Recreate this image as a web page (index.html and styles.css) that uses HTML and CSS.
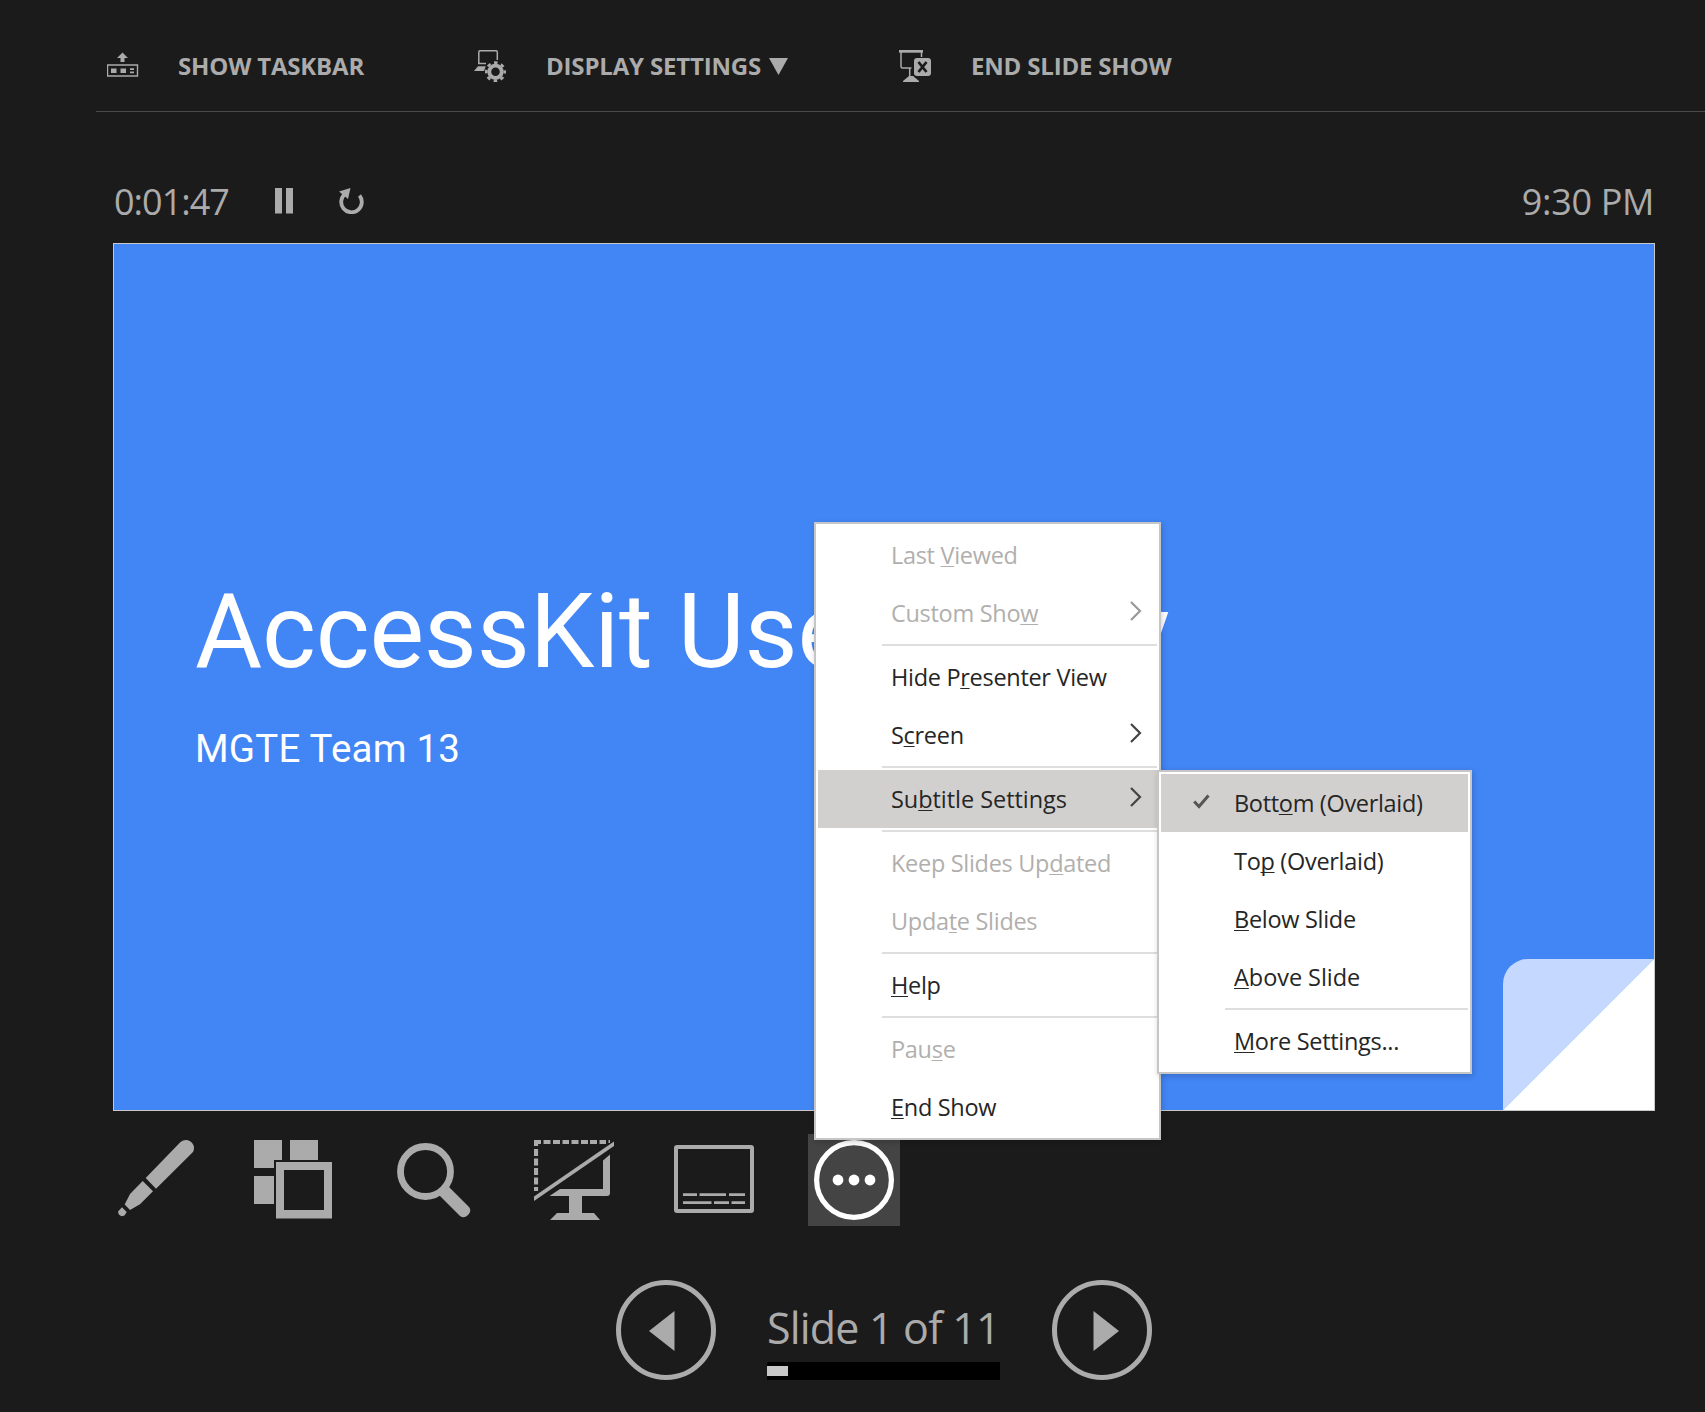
FILE: index.html
```html
<!DOCTYPE html>
<html lang="en">
<head>
<meta charset="utf-8">
<title>Presenter View</title>
<link rel="stylesheet" href="styles.css">
</head>
<body>
<div class="presenter">
  <header class="topbar">
    <button class="command command-taskbar">
      <svg width="32" height="32" viewBox="0 0 32 32" fill="#ababab">
        <path d="M15.500 2.500 21 8H17.500V12H13.500V8H10Z"/>
        <path d="M.5 15H30.500V26H.5Z" fill="none" stroke="#ababab" stroke-width="1.400"/>
        <path d="M4 18.500H9.500V23H4ZM13.500 18.500H19V23H13.500ZM23 18.300H27V20H23ZM23 21.500H27V23.200H23Z"/>
      </svg>
      <span>SHOW TASKBAR</span>
    </button>
    <button class="command command-display">
      <svg width="32" height="32" viewBox="0 0 32 32" fill="#ababab">
        <path d="M23.300 10V2Q23.300.8 22 .8H6Q4.800.8 4.800 2V13.400H12" fill="none" stroke="#ababab" stroke-width="1.500"/>
        <path d="M4 16.200H11.800L10 21H0Z"/>
        <circle cx="21.500" cy="21.800" r="6.200" fill="none" stroke="#ababab" stroke-width="3.800"/>
        <circle cx="21.500" cy="21.800" r="9.200" fill="none" stroke="#ababab" stroke-width="2.600" stroke-dasharray="3.610 3.615" stroke-dashoffset="1.800"/>
      </svg>
      <span>DISPLAY SETTINGS</span>
      <svg class="caret" width="20" height="18" viewBox="0 0 20 18"><path d="M0 0H19L9.500 17Z" fill="#ababab"/></svg>
    </button>
    <button class="command command-end">
      <svg width="32" height="32" viewBox="0 0 32 32" fill="#ababab">
        <path d="M0 0H24V2.700H0Z"/>
        <path d="M2 2V16.500Q2 18 3.500 18H12.500M22.500 2V7M10.700 18V28M13.600 26V28" fill="none" stroke="#ababab" stroke-width="1.500"/>
        <path d="M10 26H14L20 31V32H4V31Z"/>
        <rect x="15" y="8" width="17" height="18" rx="3"/>
        <path d="M19.500 12 27.500 22M27.500 12 19.500 22" stroke="#1b1b1b" stroke-width="2.800"/>
      </svg>
      <span>END SLIDE SHOW</span>
    </button>
  </header>

  <div class="clockbar">
    <span class="timer">0:01:47</span>
    <svg class="pause" width="18" height="26" viewBox="0 0 18 26" fill="#ababab"><path d="M0 0H7V25.500H0ZM11 0H18V25.500H11Z"/></svg>
    <svg class="restart" width="26" height="26" viewBox="0 0 26 26">
      <path d="M20.500 7.500A10.300 10.300 0 1 1 6 6" fill="none" stroke="#ababab" stroke-width="3.800"/>
      <path d="M0 3.500 11.500 0 9 11Z" fill="#ababab"/>
    </svg>
    <span class="clock">9:30 PM</span>
  </div>

  <main class="slide">
    <h1 class="slide-title">AccessKit User Study</h1>
    <p class="slide-subtitle">MGTE Team 13</p>
    <svg class="fold" width="151" height="151" viewBox="0 0 151 151">
      <path d="M0 151V25A25 25 0 0 1 25 0H151Z" fill="#c5d8ff"/>
      <path d="M0 151 151 0V151Z" fill="#fff"/>
    </svg>
  </main>

  <nav class="tools">
    <button class="tool">
      <svg width="80" height="80" viewBox="0 0 80 80" fill="#ababab">
        <path d="M31.700 38 66.500 2Q69 0 72 0Q76 0 78.500 3.500Q80 5.500 80 8Q80 11 78.500 12.500L42 48.700Z"/>
        <path d="M28.700 41 39 51.300 26 64.300 16 70 10.700 64.500 16 54Z"/>
        <path d="M8 67.300 12.700 72 10.500 75.500 7.500 76.300 4.800 74.500 4 71.500Z"/>
      </svg>
    </button>
    <button class="tool">
      <svg width="80" height="80" viewBox="0 0 80 80" fill="#ababab">
        <path d="M0 0H28V20H20V28H0ZM36 0H64V20H36ZM0 36H20V64H0Z"/>
        <path d="M22 22H78V78.500H22ZM30 30V70H70V30Z" fill-rule="evenodd"/>
      </svg>
    </button>
    <button class="tool">
      <svg width="80" height="80" viewBox="0 0 80 80">
        <circle cx="31.500" cy="31.500" r="25" fill="none" stroke="#ababab" stroke-width="6.800"/>
        <path d="M45 55 54 46 75 67Q78 71 74 75Q70 79 66 76Z" fill="#ababab"/>
      </svg>
    </button>
    <button class="tool">
      <svg width="80" height="80" viewBox="0 0 80 80" fill="#ababab">
        <path d="M0 2H7M9.500 2H16.500M19 2H26M28.500 2H35M37.500 2H44.500M47 2H54M56 2H63M65.500 2H72M74.500 1H76M2 0V6M2 9V16M2 18.500V25.500M2 28V35M2 37.500V44.500M2 47V51" stroke="#ababab" stroke-width="4.200" fill="none"/>
        <path d="M0 56.500 80 1.500V6L0 61Z"/>
        <path d="M76 14.500V53Q76 56 73 56H48V73H60L66 80H16L23 73H35V56H15.500L26 49H69V20.500Z"/>
      </svg>
    </button>
    <button class="tool">
      <svg width="80" height="80" viewBox="0 0 80 80" fill="none" stroke="#ababab">
        <rect x="2" y="7" width="76" height="64" rx="1" stroke-width="4"/>
        <path d="M9 54.700H23M25.500 54.700H52M55 54.700H71M9 62.700H37.500M40 62.700H55M57.500 62.700H71" stroke-width="2.700"/>
      </svg>
    </button>
    <button class="tool tool-active">
      <svg width="80" height="80" viewBox="0 0 80 80">
        <circle cx="40" cy="40" r="37.400" fill="none" stroke="#fff" stroke-width="5.200"/>
        <g fill="#fff"><circle cx="24" cy="40" r="5.400"/><circle cx="40" cy="40" r="5.400"/><circle cx="56" cy="40" r="5.400"/></g>
      </svg>
    </button>
  </nav>

  <footer class="pager">
    <button class="page-button">
      <svg width="100" height="100" viewBox="0 0 100 100"><circle cx="50" cy="50" r="47.500" fill="none" stroke="#ababab" stroke-width="5"/><path d="M33 51 58.500 31V71Z" fill="#ababab"/></svg>
    </button>
    <div class="position">
      <span class="position-label">Slide 1 of 11</span>
      <div class="progress"><div class="progress-fill" style="width: 9.090%"></div></div>
    </div>
    <button class="page-button">
      <svg width="100" height="100" viewBox="0 0 100 100"><circle cx="50" cy="50" r="47.500" fill="none" stroke="#ababab" stroke-width="5"/><path d="M67 51 41.500 31V71Z" fill="#ababab"/></svg>
    </button>
  </footer>

  <div class="menu options-menu">
    <div class="item disabled"><span>Last <u>V</u>iewed</span></div>
    <div class="item disabled"><span>Custom Sho<u>w</u></span><svg class="chevron" width="12" height="20" viewBox="0 0 12 20"><path d="M1 1 10 10 1 19"/></svg></div>
    <hr>
    <div class="item"><span>Hide P<u>r</u>esenter View</span></div>
    <div class="item"><span>S<u>c</u>reen</span><svg class="chevron" width="12" height="20" viewBox="0 0 12 20"><path d="M1 1 10 10 1 19"/></svg></div>
    <hr>
    <div class="item selected"><span class="loose">Su<u>b</u>title Settings</span><svg class="chevron" width="12" height="20" viewBox="0 0 12 20"><path d="M1 1 10 10 1 19"/></svg></div>
    <hr>
    <div class="item disabled"><span>Keep Slides Up<u>d</u>ated</span></div>
    <div class="item disabled"><span>Upda<u>t</u>e Slides</span></div>
    <hr>
    <div class="item"><span><u>H</u>elp</span></div>
    <hr>
    <div class="item disabled"><span>Pau<u>s</u>e</span></div>
    <div class="item"><span><u>E</u>nd Show</span></div>
  </div>

  <div class="menu subtitle-menu">
    <div class="item selected"><svg class="check" width="17" height="15" viewBox="0 0 17 15"><path d="M1.200 7.500 6 12.500 15.500 1.500"/></svg><span>Bott<u>o</u>m (Overlaid)</span></div>
    <div class="item"><span>To<u>p</u> (Overlaid)</span></div>
    <div class="item"><span><u>B</u>elow Slide</span></div>
    <div class="item"><span class="loose"><u>A</u>bove Slide</span></div>
    <hr>
    <div class="item"><span><u>M</u>ore Settings...</span></div>
  </div>
</div>
</body>
</html>
```
FILE: styles.css
```css
* { box-sizing: border-box; }

body {
  margin: 0;
  background: #1b1b1b;
  color: #ababab;
  font-family: "Open Sans", "Noto Sans", sans-serif;
}

button {
  padding: 0;
  border: 0;
  background: none;
  color: inherit;
  font: inherit;
}

svg { display: block; flex: none; }

.presenter {
  position: relative;
  width: 1705px;
  height: 1412px;
  overflow: hidden;
}

.topbar {
  display: flex;
  height: 112px;
  margin-left: 96px;
  padding: 50px 0 0 11px;
  border-bottom: 1px solid #4a4a4a;
}

.command {
  display: flex;
  align-items: center;
  height: 32px;
  font-size: 24px;
  font-weight: 700;
  letter-spacing: -.18px;
  line-height: 32px;
  white-space: nowrap;
}

.command > svg:first-child { margin-right: 40px; }
.command-taskbar > svg:first-child { margin-right: 39px; }
.command-taskbar { width: 367px; }
.command-display { width: 425px; }
.caret { margin: 2px 0 0 8px; }

.clockbar {
  display: flex;
  height: 131px;
  padding: 65px 51px 0 114px;
  font-size: 36px;
  line-height: 50px;
}

.timer {
  width: 161px;
  letter-spacing: -1px;
}

.clock { letter-spacing: -.35px; }
.pause { margin: 11px 46px 0 0; }
.restart { margin: 11px auto 0 0; }

.slide {
  position: relative;
  width: 1542px;
  height: 868px;
  margin-left: 113px;
  padding: 328px 0 0 81px;
  border: 1px solid #c8c8c8;
  background: #4285f4;
  color: #fff;
  font-family: Roboto, sans-serif;
}

.slide-title {
  margin: 0;
  font-size: 103px;
  font-weight: 400;
  letter-spacing: -.2px;
  line-height: 120px;
  white-space: nowrap;
}

.slide-subtitle {
  margin: 34px 0 0;
  font-size: 38.500px;
  letter-spacing: .22px;
  line-height: 46px;
}

.fold {
  position: absolute;
  right: 0;
  bottom: 0;
}

.tools {
  display: flex;
  gap: 48px;
  padding: 23px 0 0 108px;
}

.tool {
  display: grid;
  place-items: center;
  width: 92px;
  height: 92px;
}

.tool-active { background: #444; }

.pager {
  display: flex;
  padding: 54px 0 0 616px;
}

.position {
  width: 233px;
  margin: 0 52px 0 51px;
}

.position-label {
  display: block;
  height: 82px;
  padding-top: 18px;
  font-size: 43px;
  letter-spacing: -.82px;
  line-height: 60px;
  white-space: nowrap;
}

.progress {
  height: 18px;
  padding: 4px 0;
  background: #000;
}

.progress-fill {
  height: 10px;
  background: #c8c8c8;
}

.menu {
  position: absolute;
  padding: 2px;
  border: 2px solid #c6c6c6;
  background: #fff;
  color: #262626;
  font-size: 23.500px;
  letter-spacing: -.3px;
  box-shadow: 1px 2px 6px rgba(0, 0, 0, .18);
}

.options-menu { left: 814px; top: 522px; width: 347px; }
.subtitle-menu { left: 1157px; top: 770px; width: 315px; }

.item {
  display: flex;
  position: relative;
  justify-content: space-between;
  height: 58px;
  padding: 0 15px 0 73px;
  line-height: 58px;
  white-space: nowrap;
}

.disabled { color: #b1afad; }
.selected { background: #d2d0ce; }
.loose { letter-spacing: -.05px; }
.subtitle-menu .selected { letter-spacing: -.32px; }

.item u {
  text-decoration-thickness: 1px;
  text-underline-offset: 2px;
  text-decoration-skip-ink: none;
}

.menu hr {
  height: 2px;
  margin: 2px 0 2px 64px;
  border: 0;
  background: #dedede;
}

.chevron {
  margin-top: 17px;
  fill: none;
  stroke: #444;
  stroke-width: 2.200;
}

.disabled .chevron { stroke: #999; }

.check {
  position: absolute;
  left: 32px;
  top: 20px;
  fill: none;
  stroke: #555;
  stroke-width: 3;
}
```
